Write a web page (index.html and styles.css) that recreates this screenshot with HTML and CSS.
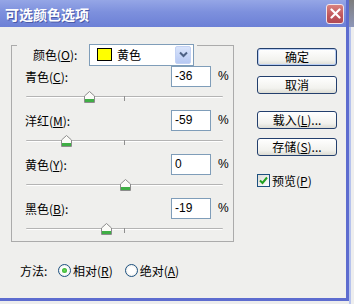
FILE: index.html
```html
<!DOCTYPE html>
<html lang="zh-CN">
<head>
  <meta charset="UTF-8">
  <title>可选颜色选项</title>
  <link rel="stylesheet" href="styles.css">
</head>
<body>
<div class="window">
  <div class="titlebar">
    <span class="title">可选颜色选项</span>
    <span class="close">
      <svg width="11" height="11" viewBox="0 0 11 11"><path d="M1.5 1.5 L9.5 9.5 M9.5 1.5 L1.5 9.5" stroke="#fff" stroke-width="2.2" stroke-linecap="round"/></svg>
    </span>
  </div>

  <div class="content">
    <div class="left">
      <div class="group">
        <div class="group-head">
          <span class="head-label">颜色(<u>O</u>):</span>
          <div class="select">
            <span class="swatch"></span>
            <span class="select-text">黄色</span>
            <span class="select-btn">
              <svg width="9" height="7" viewBox="0 0 9 7"><path d="M1 1.5 L4.5 5 L8 1.5" fill="none" stroke="#4d6185" stroke-width="2"/></svg>
            </span>
          </div>
        </div>

        <div class="block">
          <div class="row">
            <span class="row-label">青色(<u>C</u>):</span>
            <div class="num">-36</div>
            <span class="pct">%</span>
          </div>
          <div class="slider">
            <div class="track"></div>
            <div class="tick"></div>
            <svg class="thumb" style="left: 32%" width="11" height="12" viewBox="0 0 11 12"><path d="M0.5 5 L5.5 0.5 L10.5 5 V11.5 H0.5 Z" fill="#fbfbf8" stroke="#8c8c8c"/><rect x="1" y="8" width="9" height="3" fill="#3fae45"/></svg>
          </div>
        </div>

        <div class="block">
          <div class="row">
            <span class="row-label">洋红(<u>M</u>):</span>
            <div class="num">-59</div>
            <span class="pct">%</span>
          </div>
          <div class="slider">
            <div class="track"></div>
            <div class="tick"></div>
            <svg class="thumb" style="left: 20.5%" width="11" height="12" viewBox="0 0 11 12"><path d="M0.5 5 L5.5 0.5 L10.5 5 V11.5 H0.5 Z" fill="#fbfbf8" stroke="#8c8c8c"/><rect x="1" y="8" width="9" height="3" fill="#3fae45"/></svg>
          </div>
        </div>

        <div class="block">
          <div class="row">
            <span class="row-label">黄色(<u>Y</u>):</span>
            <div class="num">0</div>
            <span class="pct">%</span>
          </div>
          <div class="slider">
            <div class="track"></div>
            <div class="tick"></div>
            <svg class="thumb" style="left: 50%" width="11" height="12" viewBox="0 0 11 12"><path d="M0.5 5 L5.5 0.5 L10.5 5 V11.5 H0.5 Z" fill="#fbfbf8" stroke="#8c8c8c"/><rect x="1" y="8" width="9" height="3" fill="#3fae45"/></svg>
          </div>
        </div>

        <div class="block">
          <div class="row">
            <span class="row-label">黑色(<u>B</u>):</span>
            <div class="num">-19</div>
            <span class="pct">%</span>
          </div>
          <div class="slider">
            <div class="track"></div>
            <div class="tick"></div>
            <svg class="thumb" style="left: 40.5%" width="11" height="12" viewBox="0 0 11 12"><path d="M0.5 5 L5.5 0.5 L10.5 5 V11.5 H0.5 Z" fill="#fbfbf8" stroke="#8c8c8c"/><rect x="1" y="8" width="9" height="3" fill="#3fae45"/></svg>
          </div>
        </div>
      </div>

      <div class="method">
        <span class="method-label">方法:</span>
        <span class="radio checked"></span>
        <span class="radio-text">相对(<u>R</u>)</span>
        <span class="radio second"></span>
        <span class="radio-text">绝对(<u>A</u>)</span>
      </div>
    </div>

    <div class="right">
      <button class="btn default">确定</button>
      <button class="btn cancel">取消</button>
      <button class="btn load">载入(<u>L</u>)...</button>
      <button class="btn save">存储(<u>S</u>)...</button>
      <div class="check-row">
        <span class="checkbox">
          <svg width="9" height="9" viewBox="0 0 9 9"><path d="M1 4.5 L3.5 7 L8 1.5" fill="none" stroke="#21a121" stroke-width="2"/></svg>
        </span>
        <span>预览(<u>P</u>)</span>
      </div>
    </div>
  </div>
</div>
<div class="desk">
  <div class="desk-top"></div>
  <div class="desk-side"></div>
</div>
</body>
</html>
```

FILE: styles.css
```css
* {
  box-sizing: border-box;
}

body {
  margin: 0;
  padding: 0;
  width: 354px;
  height: 304px;
  display: flex;
  background: #ededed;
  font-family: "Noto Sans CJK SC", "Liberation Sans", sans-serif;
  font-size: 12px;
  color: #000;
  overflow: hidden;
}

u {
  text-decoration: underline;
  text-underline-offset: 1px;
}

.window {
  width: 349px;
  height: 301px;
  flex-shrink: 0;
  display: flex;
  flex-direction: column;
  background: #efefed;
  border-right: 3px solid #5d6ccf;
  border-bottom: 3px solid #5d6ccf;
}

.titlebar {
  height: 27px;
  flex-shrink: 0;
  display: flex;
  align-items: center;
  justify-content: space-between;
  padding: 0 2px 0 5px;
  background: linear-gradient(#95a6e6, #7d90dd 45%, #6c80d6);
}

.title {
  color: #fff;
  font-weight: bold;
  font-size: 14px;
  text-shadow: 1px 1px 0 #4a5aa8;
}

.close {
  width: 18px;
  height: 20px;
  display: flex;
  align-items: center;
  justify-content: center;
  border: 1px solid #f3e4e8;
  border-radius: 3px;
  background: linear-gradient(#d9817f, #c0555a 60%, #b04a55);
}

.content {
  flex: 1;
  display: flex;
}

.left {
  width: 234px;
  padding-left: 11px;
}

.group {
  margin-top: 18px;
  width: 223px;
  height: 197px;
  border: 1px solid #ababab;
}

.group-head {
  display: inline-flex;
  align-items: center;
  margin: -10px 0 0 5px;
  padding: 0 3px 0 16px;
  height: 22px;
  background: #efefed;
}

.head-label {
  width: 56px;
}

.select {
  width: 105px;
  height: 22px;
  display: flex;
  align-items: center;
  background: #fff;
  border: 1px solid #7f9db9;
  padding: 0 2px 0 7px;
}

.swatch {
  width: 15px;
  height: 13px;
  background: #ffff00;
  border: 1px solid #000;
}

.select-text {
  flex: 1;
  margin-left: 5px;
}

.select-btn {
  width: 16px;
  height: 18px;
  display: flex;
  align-items: center;
  justify-content: center;
  border-radius: 2px;
  background: linear-gradient(#d9e4fb, #b7c9f3);
  border: 1px solid #c3d2f4;
}

.row {
  height: 21px;
  display: flex;
  align-items: center;
  padding-left: 13px;
}

.row-label {
  width: 146px;
}

.num {
  width: 40px;
  height: 21px;
  border: 1px solid #7f9db9;
  background: #fff;
  padding: 2px 0 0 3px;
  font-family: "Liberation Sans", sans-serif;
  font-size: 12px;
  line-height: 15px;
}

.pct {
  margin-left: 7px;
  width: 15px;
  font-family: "Liberation Sans", sans-serif;
}

.slider {
  position: relative;
  margin-left: 14px;
  width: 197px;
  height: 23px;
}

.track {
  position: absolute;
  left: 0;
  right: 0;
  top: 9px;
  height: 2px;
  border-radius: 1px;
  background: #b4b4b4;
  border-bottom: 1px solid #fff;
}

.tick {
  position: absolute;
  left: 98px;
  top: 9px;
  width: 1px;
  height: 5px;
  background: #8f8f8f;
}

.thumb {
  position: absolute;
  top: 4px;
  margin-left: -5px;
  display: block;
}

.method {
  margin-top: 20px;
  height: 16px;
  display: flex;
  align-items: center;
  padding-left: 9px;
}

.method-label {
  width: 38px;
}

.radio {
  width: 13px;
  height: 13px;
  border-radius: 50%;
  border: 1px solid #1c5180;
  background: radial-gradient(circle, #ffffff 40%, #e2e2dd);
  display: flex;
  align-items: center;
  justify-content: center;
  margin-right: 2px;
}

.radio.checked::after {
  content: "";
  width: 5px;
  height: 5px;
  border-radius: 50%;
  background: radial-gradient(circle, #6fdc5c, #21a121);
}

.radio.second {
  margin-left: 12px;
}

.right {
  width: 112px;
  padding-left: 23px;
  display: flex;
  flex-direction: column;
  align-items: flex-start;
}

.btn {
  width: 80px;
  height: 18px;
  padding: 0;
  font-family: "Noto Sans CJK SC", "Liberation Sans", sans-serif;
  font-size: 12px;
  line-height: 14px;
  color: #000;
  border: 1px solid #233f6d;
  border-radius: 3px;
  background: linear-gradient(#ffffff, #f2f2ee 70%, #dcdcd4);
}

.btn.default {
  margin-top: 21px;
  box-shadow: inset 0 0 0 1px #b8cdf3;
}

.btn.cancel {
  margin-top: 10px;
}

.btn.load {
  margin-top: 17px;
}

.btn.save {
  margin-top: 9px;
}

.check-row {
  margin-top: 16px;
  display: flex;
  align-items: center;
  gap: 2px;
}

.checkbox {
  width: 13px;
  height: 13px;
  border: 1px solid #1c5180;
  background: linear-gradient(135deg, #dcdcd7, #ffffff);
  display: flex;
  align-items: center;
  justify-content: center;
}

.desk {
  flex: 1;
  display: flex;
  flex-direction: column;
}

.desk-top {
  height: 27px;
  background: linear-gradient(#7d7d7d, #8d96b8);
}

.desk-side {
  flex: 1;
  border-left: 2px solid #b6c3ee;
  background: #eeeeee;
}
```
